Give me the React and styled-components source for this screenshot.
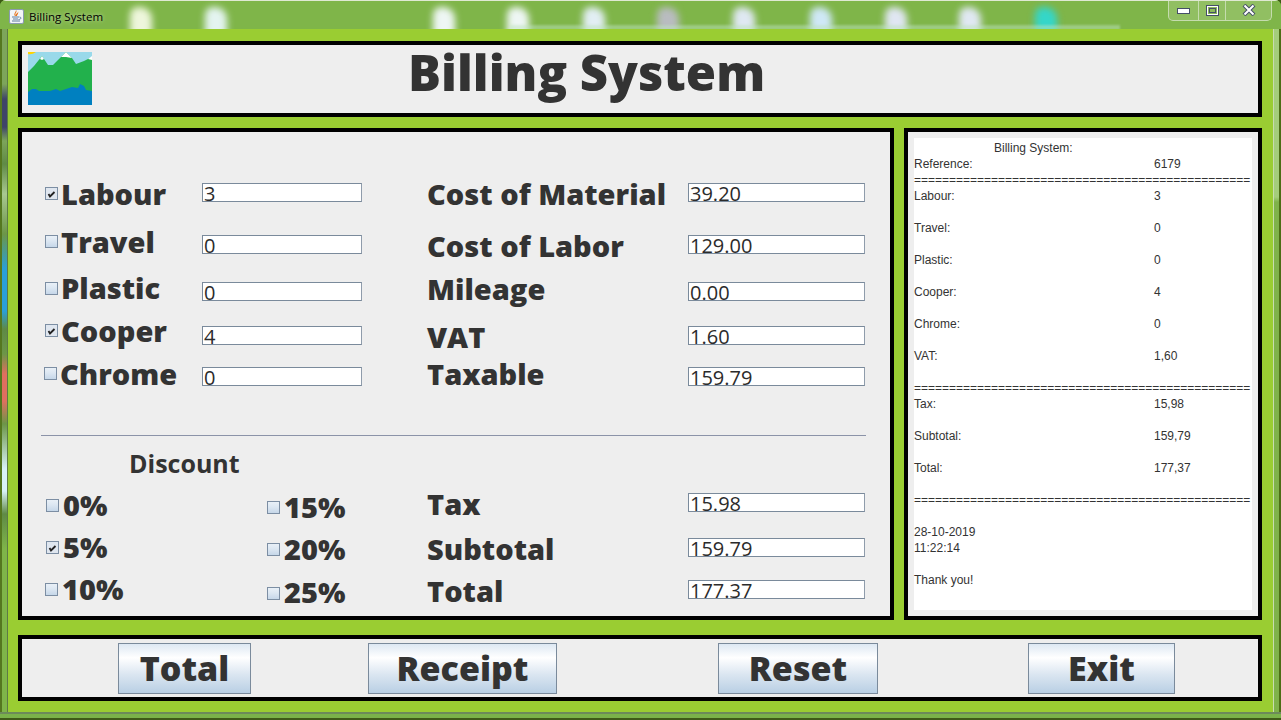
import React from "react";
import styled, { createGlobalStyle } from "styled-components";

const Global = createGlobalStyle`
  html, body {
    margin: 0;
    padding: 0;
    width: 1281px;
    height: 720px;
    overflow: hidden;
    background: #3c5a12;
  }
  * { box-sizing: border-box; }
`;

const uiFont = `"Open Sans", "Noto Sans", sans-serif`;

const Window = styled.div`
  width: 1281px;
  height: 720px;
  display: flex;
  flex-direction: column;
  background: #7db44a;
  border-radius: 6px 6px 0 0;
  overflow: hidden;
`;

const TitleBar = styled.div`
  position: relative;
  height: 29px;
  flex: none;
  display: flex;
  align-items: center;
  padding: 2px 0 0 9px;
  background: #7fb549;
  border-top: 1px solid #dfe9d2;
  overflow: hidden;
`;

const Blur = styled.div`
  position: absolute;
  top: 6px;
  width: 22px;
  height: 30px;
  border-radius: 8px 12px 0 0;
  filter: blur(3.5px);
  background: ${(p) => p.$color || "#eef6f4"};
`;

const Haze = styled.div`
  position: absolute;
  left: 510px;
  top: 24px;
  width: 610px;
  height: 5px;
  filter: blur(1px);
  background: rgba(190, 225, 190, 0.5);
`;

const AppIcon = styled.div`
  position: relative;
  width: 15px;
  height: 15px;
  flex: none;
  background: #f2f5f8;
  border: 1px solid #8b9bb0;
  border-radius: 2px;
  display: flex;
`;

const TitleText = styled.span`
  position: relative;
  margin-left: 5px;
  font: 400 11.5px ${uiFont};
  color: #000;
  text-shadow: 0 0 4px rgba(255, 255, 255, 0.6);
`;

const Controls = styled.div`
  position: absolute;
  top: -1px;
  right: 9px;
  height: 21px;
  display: flex;
  background: rgba(255, 255, 255, 0.14);
  border: 1px solid #c5dcae;
  border-top: none;
  border-radius: 0 0 5px 5px;
`;

const ControlButton = styled.div`
  width: ${(p) => p.$w}px;
  display: flex;
  align-items: center;
  justify-content: center;
  border-left: ${(p) => (p.$first ? "none" : "1px solid #c5dcae")};
`;

const Middle = styled.div`
  flex: 1;
  display: flex;
  min-height: 0;
`;

const LeftEdge = styled.div`
  width: 8px;
  flex: none;
  border-left: 2px solid #55771f;
  border-right: 1px solid #5d7a45;
  background: linear-gradient(
    to bottom,
    #7da55a 0,
    #7da55a 55px,
    #3f4468 70px,
    #3f4468 98px,
    #7da55a 112px,
    #5f8a45 135px,
    #a8c890 165px,
    #6c9647 205px,
    #2a9fd8 240px,
    #2a9fd8 282px,
    #5f8a45 300px,
    #6c9647 325px,
    #e0705f 345px,
    #e0705f 372px,
    #6c9647 395px,
    #d8f2f8 440px,
    #d8f2f8 462px,
    #5f8a45 485px,
    #7fb549 520px
  );
`;

const RightEdge = styled.div`
  width: 8px;
  flex: none;
  border-right: 2px solid #4c6d14;
  border-left: 1px solid #c8dcb0;
  background: linear-gradient(to bottom, #a4cd7a 0, #a4cd7a 168px, #7fb24a 173px);
`;

const Client = styled.main`
  flex: 1;
  display: flex;
  flex-direction: column;
  background: #9acd32;
  padding: 12px 11px 11px 10px;
  color: #333;
  font-family: ${uiFont};
`;

const Footer = styled.div`
  height: 8px;
  flex: none;
  border-top: 2px solid #6c8a5a;
  border-bottom: 2px solid #3f5a18;
  background: #7ab24a;
`;

const Panel = styled.section`
  border: 4px solid #000;
  background: #eeeeee;
`;

const Header = styled(Panel)`
  height: 76px;
  flex: none;
  display: flex;
  padding: 7px 0 0 6px;
`;

const Heading = styled.h1`
  margin: -14px 0 0 316px;
  font: 800 49px/68px ${uiFont};
  color: #333;
  white-space: nowrap;
`;

const Content = styled.div`
  height: 492px;
  flex: none;
  margin-top: 11px;
  display: flex;
  gap: 10px;
`;

const FormPanel = styled(Panel)`
  width: 876px;
  padding-top: 51px;
`;

const FormRow = styled.div`
  display: grid;
  grid-template-columns: 158px 160px 65px 261px 177px;
  height: ${(p) => p.$h}px;
  padding-left: 22px;
`;

const DiscountRow = styled.div`
  display: grid;
  grid-template-columns: 223px 160px 261px 177px;
  height: ${(p) => p.$h}px;
  padding-left: 22px;
`;

const Option = styled.div`
  display: flex;
  align-items: flex-start;
  padding-left: ${(p) => p.$x || 0}px;
`;

const Tick = styled.span`
  width: 13px;
  height: 13px;
  flex: none;
  display: flex;
  margin-top: ${(p) => p.$top}px;
  border: 1px solid #7c8ea3;
  background: ${(p) =>
    p.$on
      ? "#dfe6ef"
      : "linear-gradient(to bottom, #e9f0f7 0%, #dce7f2 45%, #c6d7e9 100%)"};
`;

const Label = styled.span`
  margin-top: ${(p) => p.$top}px;
  margin-left: ${(p) => p.$x ?? 3}px;
  font-weight: 800;
  font-size: 29px;
  line-height: 30px;
  color: #333;
  white-space: nowrap;
`;

const Field = styled.input`
  display: block;
  width: 100%;
  height: 19px;
  margin: 0;
  padding: 1px 0 0 1px;
  border: 1px solid #7a8a9b;
  border-right-color: #8f9cab;
  border-radius: 0;
  outline: none;
  background: #fff;
  font: 400 20px/16px ${uiFont};
  color: #2b2b2b;
`;

const Divider = styled.hr`
  margin: 0 0 0 19px;
  width: 825px;
  height: 1px;
  border: none;
  background: #8b93a8;
`;

const DiscountTitle = styled.h2`
  margin: 0;
  height: 57px;
  padding: 12px 0 0 107px;
  font-weight: 700;
  font-size: 25px;
  line-height: 30px;
  color: #333;
`;

const ReceiptPanel = styled(Panel)`
  flex: 1;
  padding: 6px;
`;

const Paper = styled.div`
  height: 100%;
  background: #fff;
  padding-top: 2px;
  font: 400 12px/16px "Liberation Sans", Arial, sans-serif;
  color: #333;
`;

const ReceiptLine = styled.div`
  display: grid;
  grid-template-columns: 240px 1fr;
  height: 16px;
  white-space: nowrap;
  padding-left: ${(p) => p.$indent || 0}px;
`;

const ButtonBar = styled(Panel)`
  height: 66px;
  flex: none;
  margin-top: 15px;
  display: flex;
  align-items: flex-start;
  padding: 4px 0 0 96px;
`;

const ActionButton = styled.button`
  width: ${(p) => p.$w}px;
  height: 51px;
  margin: 0 0 0 ${(p) => p.$gap || 0}px;
  padding: 0;
  border: 1px solid #7a8a9b;
  border-radius: 0;
  background: linear-gradient(to bottom, #dde8f3 0%, #ffffff 28%, #dbe6f1 62%, #b9cfe4 100%);
  font: 800 34px/45px ${uiFont};
  color: #333;
`;

const topRows = [
  { name: "Labour", value: "3", on: true, tick: 4, top: -4, h: 52, x: 1, right: "Cost of Material", rightValue: "39.20", rightTop: -4 },
  { name: "Travel", value: "0", tick: 0, top: -8, h: 47, x: 1, right: "Cost of Labor", rightValue: "129.00", rightTop: -4 },
  { name: "Plastic", value: "0", tick: 0, top: -9, h: 44, x: 1, right: "Mileage", rightValue: "0.00", rightTop: -8 },
  { name: "Cooper", value: "4", on: true, tick: -2, top: -10, h: 41, x: 1, right: "VAT", rightValue: "1.60", rightTop: -4 },
  { name: "Chrome", value: "0", tick: 0, top: -8, h: 68, x: 0, right: "Taxable", rightValue: "159.79", rightTop: -8 },
];

const discountRows = [
  {
    h: 45,
    a: { name: "0%", tick: 6, top: -3, x: 2 },
    b: { name: "15%", tick: 8, top: -1 },
    right: "Tax",
    rightValue: "15.98",
    rightTop: -4,
  },
  {
    h: 42,
    a: { name: "5%", on: true, tick: 3, top: -6, x: 2 },
    b: { name: "20%", tick: 5, top: -4 },
    right: "Subtotal",
    rightValue: "159.79",
    rightTop: -4,
  },
  {
    h: 35,
    a: { name: "10%", tick: 3, top: -6, x: 1 },
    b: { name: "25%", tick: 7, top: -3 },
    right: "Total",
    rightValue: "177.37",
    rightTop: -4,
  },
];

const receipt = [
  { indent: 80, left: "Billing System:" },
  { left: "Reference:", right: "6179" },
  { left: "================================================" },
  { left: "Labour:", right: "3" },
  {},
  { left: "Travel:", right: "0" },
  {},
  { left: "Plastic:", right: "0" },
  {},
  { left: "Cooper:", right: "4" },
  {},
  { left: "Chrome:", right: "0" },
  {},
  { left: "VAT:", right: "1,60" },
  {},
  { left: "================================================" },
  { left: "Tax:", right: "15,98" },
  {},
  { left: "Subtotal:", right: "159,79" },
  {},
  { left: "Total:", right: "177,37" },
  {},
  { left: "================================================" },
  {},
  { left: "28-10-2019" },
  { left: "11:22:14" },
  {},
  { left: "Thank you!" },
];

const blurs = [
  { left: 130, color: "#eef6dc" },
  { left: 205, color: "#e4f4f0" },
  { left: 433 },
  { left: 507 },
  { left: 583, color: "#e2eef4" },
  { left: 657, color: "#b9bcc0" },
  { left: 733, color: "#dfe8f2" },
  { left: 810, color: "#cfe8f6" },
  { left: 885, color: "#e0e6f2" },
  { left: 959, color: "#e0e8f2" },
  { left: 1035, color: "#35d6c8" },
];

const CheckBox = ({ on, top }) => (
  <Tick $on={on} $top={top}>
    {on && (
      <svg width="11" height="11" viewBox="0 0 11 11">
        <path d="M2.5 6 L4 8.5 L8.5 4" stroke="#222" strokeWidth="1.8" fill="none" />
      </svg>
    )}
  </Tick>
);

const Logo = () => (
  <svg width="64" height="53" viewBox="0 0 64 53">
    <rect width="64" height="53" fill="#99d9ea" />
    <path d="M0 0 H8 Q4 3 0 2 Z" fill="#ffd400" />
    <path
      d="M0 20 L6 14 L14 4 L20 13 L25 13 L33 5 L38 0 L44 6 L48 12 L56 9 L64 5 L64 40 L0 40 Z"
      fill="#22b14c"
    />
    <path d="M12 7 L14 4 L16 7 L14 8 Z M33 5 L38 0 L44 6 L38 5 Z M60 7 L64 4 L64 8 Z" fill="#fff" />
    <path
      d="M0 40 L4 37 L8 37 L11 39 L16 39 L22 39 L28 37 L32 39 L38 37 L44 35 L50 36 L52 32 L56 34 L58 38 L64 39 L64 53 L0 53 Z"
      fill="#0080c0"
    />
  </svg>
);

const JavaIcon = () => (
  <svg width="13" height="13" viewBox="0 0 13 13">
    <path d="M6 0 C8 2 4 3 6 6 C5 3 9 3 8 1 C9 3 7 5 7 6 L5 6 C3 4 6 2 6 0 Z" fill="#e8741c" />
    <path d="M2 7 H9 M3 9 H8 M2 11 H10" stroke="#5f7f9f" strokeWidth="1" fill="none" />
    <path d="M9.5 7 C11.5 7 11.5 9.5 8.5 9.5" stroke="#5f7f9f" fill="none" />
  </svg>
);

const Check = ({ data }) => (
  <Option $x={data.x ?? 1}>
    <CheckBox on={data.on} top={data.tick} />
    <Label $top={data.top} $x={4}>
      {data.name}
    </Label>
  </Option>
);

const App = () => {
  return (
    <Window>
      <Global />
      <TitleBar>
        {blurs.map((b) => (
          <Blur key={b.left} $color={b.color} style={{ left: b.left }} />
        ))}
        <Haze />
        <AppIcon>
          <JavaIcon />
        </AppIcon>
        <TitleText>Billing System</TitleText>
        <Controls>
          <ControlButton $w={29} $first>
            <svg width="13" height="7" viewBox="0 0 13 7">
              <rect x="0.5" y="1.5" width="12" height="5" fill="#fff" stroke="#454f68" />
            </svg>
          </ControlButton>
          <ControlButton $w={27}>
            <svg width="13" height="11" viewBox="0 0 13 11">
              <rect x="1" y="1" width="11" height="9" fill="#8dbb5a" stroke="#fff" strokeWidth="2" />
              <rect x="0.5" y="0.5" width="12" height="10" fill="none" stroke="#454f68" />
              <rect x="3.5" y="3.5" width="6" height="4" fill="none" stroke="#454f68" />
            </svg>
          </ControlButton>
          <ControlButton $w={46}>
            <svg width="14" height="12" viewBox="0 0 14 12">
              <path d="M2 1 L12 11 M12 1 L2 11" stroke="#454f68" strokeWidth="4" />
              <path d="M2.5 1.5 L11.5 10.5 M11.5 1.5 L2.5 10.5" stroke="#fff" strokeWidth="2" />
            </svg>
          </ControlButton>
        </Controls>
      </TitleBar>
      <Middle>
        <LeftEdge />
        <Client>
          <Header>
            <Logo />
            <Heading>Billing System</Heading>
          </Header>
          <Content>
            <FormPanel>
              {topRows.map((row) => (
                <FormRow key={row.name} $h={row.h}>
                  <Option $x={row.x}>
                    <CheckBox on={row.on} top={row.tick} />
                    <Label $top={row.top}>{row.name}</Label>
                  </Option>
                  <Field readOnly value={row.value} />
                  <span />
                  <Label $top={row.rightTop} $x={0}>
                    {row.right}
                  </Label>
                  <Field readOnly value={row.rightValue} />
                </FormRow>
              ))}
              <Divider />
              <DiscountTitle>Discount</DiscountTitle>
              {discountRows.map((row) => (
                <DiscountRow key={row.right} $h={row.h}>
                  <Check data={row.a} />
                  <Check data={{ ...row.b, x: 0 }} />
                  <Label $top={row.rightTop} $x={0}>
                    {row.right}
                  </Label>
                  <Field readOnly value={row.rightValue} />
                </DiscountRow>
              ))}
            </FormPanel>
            <ReceiptPanel>
              <Paper>
                {receipt.map((line, i) => (
                  <ReceiptLine key={i} $indent={line.indent}>
                    <span>{line.left}</span>
                    <span>{line.right}</span>
                  </ReceiptLine>
                ))}
              </Paper>
            </ReceiptPanel>
          </Content>
          <ButtonBar>
            <ActionButton $w={133}>Total</ActionButton>
            <ActionButton $w={189} $gap={117}>Receipt</ActionButton>
            <ActionButton $w={160} $gap={161}>Reset</ActionButton>
            <ActionButton $w={147} $gap={150}>Exit</ActionButton>
          </ButtonBar>
        </Client>
        <RightEdge />
      </Middle>
      <Footer />
    </Window>
  );
};

export default App;
